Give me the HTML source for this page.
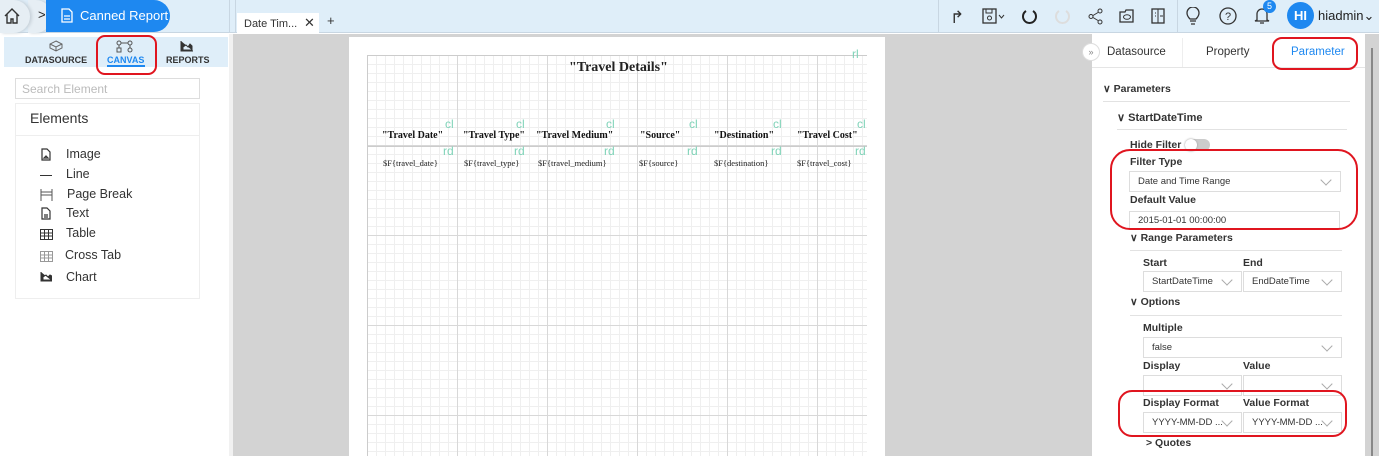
<!DOCTYPE html>
<html><head><meta charset="utf-8"><style>
*{box-sizing:border-box;margin:0;padding:0}
body{width:1379px;height:456px;overflow:hidden;background:#fff;font-family:"Liberation Sans",sans-serif;color:#222;position:relative;font-size:11px}
.a{position:absolute}
.sel{position:absolute;border:1px solid #ddd;background:#fff;font-size:9.5px;color:#333;padding-left:8px;display:flex;align-items:center}
.sel .c{position:absolute;right:10px;top:50%;width:8px;height:8px;border-right:1px solid #aaa;border-bottom:1px solid #aaa;transform:translateY(-75%) rotate(45deg)}
.lbl{position:absolute;font-size:10.5px;font-weight:bold;color:#333}
.ring{position:absolute;border:2.5px solid #e0151f;border-radius:14px}
.hdr{position:absolute;font-size:10.5px;color:#333;font-weight:bold}
.hl{position:absolute;height:1px;background:#e2e2e2}
.cl{position:absolute;color:#7fd3b8;font-size:12px}
.th{position:absolute;font-family:"Liberation Serif",serif;font-weight:bold;font-size:10px;color:#111}
.td{position:absolute;font-family:"Liberation Serif",serif;font-size:8.5px;color:#222}
.it{position:absolute;left:66px;font-size:12.5px;color:#333}
.ic{position:absolute;left:40px;font-size:12px;color:#333}
.tb{position:absolute;top:8px;font-size:17px;color:#333}
</style></head><body>
<div class="a" style="left:0;top:0;width:1379px;height:33px;background:#dfeef9;border-bottom:1px solid #c8d6e2"></div>
<div class="a" style="left:28px;top:0;width:24px;height:33px;border-radius:0 17px 17px 0;background:#e6eef4;box-shadow:2px 0 3px #c6d0d8"></div>
<div class="a" style="left:0;top:0;width:30px;height:33px;border-radius:0 17px 17px 0;background:#e6eef4;box-shadow:2px 0 3px #c6d0d8"></div>
<svg class="a" style="left:4px;top:8px" width="16" height="16"><path d="M1 8L8 1l7 7M3 6v9h4v-4h2v4h4V6" fill="none" stroke="#333" stroke-width="1.4"/></svg>
<div class="a" style="left:38px;top:7px;font-size:13px">&gt;</div>
<div class="a" style="left:46px;top:0;width:124px;height:32px;border-radius:0 17px 17px 0;background:#1e88f0"></div>
<svg class="a" style="left:61px;top:8px" width="12" height="15"><path d="M1 1h7l3 3v10H1z M3 8h6M3 11h6" fill="none" stroke="#fff" stroke-width="1.3"/></svg>
<div class="a" style="left:80px;top:8px;font-size:13px;color:#fff">Canned Report</div>
<div class="a" style="left:229px;top:0;width:1px;height:33px;background:#c8d6e2"></div>
<div class="a" style="left:235px;top:0;width:1px;height:33px;background:#c8d6e2"></div>
<div class="a" style="left:237px;top:13px;width:82px;height:21px;background:#fff"></div>
<div class="a" style="left:244px;top:18px;font-size:11px;color:#333">Date Tim...</div>
<div class="a" style="left:304px;top:15px;font-size:13px;color:#333">✕</div>
<div class="a" style="left:327px;top:13px;font-size:13px;color:#333">+</div>
<div class="a" style="left:938px;top:0;width:1px;height:33px;background:#c8d6e2"></div>
<div class="a" style="left:1177px;top:0;width:1px;height:33px;background:#c8d6e2"></div>
<div class="tb" style="left:950px">↱</div>
<svg class="a" style="left:982px;top:8px" width="24" height="17"><rect x="1" y="1" width="13" height="14" fill="none" stroke="#333" stroke-width="1.3"/><rect x="4" y="1" width="6" height="4" fill="none" stroke="#333"/><circle cx="7.5" cy="10" r="2" fill="none" stroke="#333"/><path d="M17 7l2.5 3 2.5-3" fill="none" stroke="#333"/></svg>
<svg class="a" style="left:1021px;top:8px" width="17" height="17"><path d="M5 3A6.5 6.5 0 1 0 12 3" fill="none" stroke="#222" stroke-width="2"/></svg>
<svg class="a" style="left:1054px;top:8px" width="17" height="17"><path d="M5 3A6.5 6.5 0 1 0 12 3" fill="none" stroke="#ddd" stroke-width="2"/></svg>
<svg class="a" style="left:1088px;top:8px" width="15" height="17"><circle cx="12" cy="3" r="2" fill="none" stroke="#333"/><circle cx="3" cy="8.5" r="2" fill="none" stroke="#333"/><circle cx="12" cy="14" r="2" fill="none" stroke="#333"/><path d="M5 7.5l5-3M5 9.5l5 3" stroke="#333"/></svg>
<svg class="a" style="left:1119px;top:9px" width="16" height="14"><path d="M1 3h5l1-2h7v12H1z" fill="none" stroke="#333" stroke-width="1.3"/><ellipse cx="8" cy="8" rx="3.5" ry="2.3" fill="none" stroke="#333"/></svg>
<svg class="a" style="left:1151px;top:8px" width="14" height="16"><rect x="1" y="1" width="12" height="14" fill="none" stroke="#333" stroke-width="1.3"/><path d="M7 1v14M4 5h1M4 8h1M9 8h3" stroke="#333"/></svg>
<svg class="a" style="left:1186px;top:7px" width="14" height="18"><path d="M4 12C1 9 1 7 1 6a6 6 0 0 1 12 0c0 1 0 3-3 6zM4 14h6M5 17h4" fill="none" stroke="#333" stroke-width="1.3"/></svg>
<svg class="a" style="left:1219px;top:7px" width="18" height="18"><circle cx="9" cy="9" r="8" fill="none" stroke="#333" stroke-width="1.3"/><text x="9" y="13" text-anchor="middle" font-size="11" font-family="Liberation Sans" fill="#333">?</text></svg>
<svg class="a" style="left:1254px;top:7px" width="16" height="18"><path d="M3 13V7a5 5 0 0 1 10 0v6l2 1H1zM6 16h4" fill="none" stroke="#333" stroke-width="1.3"/></svg>
<div class="a" style="left:1263px;top:0;width:13px;height:13px;border-radius:50%;background:#1e88f0;color:#fff;font-size:9px;text-align:center;line-height:13px">5</div>
<div class="a" style="left:1287px;top:2px;width:27px;height:27px;border-radius:50%;background:#1e88f0;color:#fff;font-size:13px;font-weight:bold;text-align:center;line-height:27px">HI</div>
<div class="a" style="left:1318px;top:8px;font-size:13px;color:#222">hiadmin⌄</div>
<div class="a" style="left:4px;top:37px;width:224px;height:30px;background:#dfeef9"></div>
<div class="a" style="left:25px;top:55px;font-size:9px;font-weight:bold;color:#333">DATASOURCE</div>
<svg class="a" style="left:49px;top:40px" width="14" height="12"><path d="M7 1l6 3v4l-6 3-6-3V4zM1 4l6 3 6-3M7 7v4" fill="none" stroke="#666"/></svg>
<div class="a" style="left:107px;top:55px;font-size:9px;font-weight:bold;color:#1e88f0">CANVAS</div>
<div class="a" style="left:107px;top:65px;width:38px;height:2px;background:#1e88f0"></div>
<svg class="a" style="left:116px;top:40px" width="18" height="13"><circle cx="3" cy="3" r="2" fill="none" stroke="#555"/><circle cx="14" cy="3" r="2" fill="none" stroke="#555"/><path d="M5 3h7M3 5v3M14 5v3" stroke="#555"/><rect x="1" y="8" width="4" height="4" fill="none" stroke="#555"/><circle cx="14" cy="10" r="2" fill="none" stroke="#555"/></svg>
<div class="a" style="left:166px;top:55px;font-size:9px;font-weight:bold;color:#333">REPORTS</div>
<svg class="a" style="left:180px;top:41px" width="13" height="11"><path d="M1 0v10h12M3 9V6l3-2 2 2 2-3 2 2v4z" fill="#333" stroke="#333"/></svg>
<div class="ring" style="left:96px;top:35px;width:61px;height:40px;border-radius:9px"></div>
<div class="a" style="left:15px;top:78px;width:185px;height:21px;border:1px solid #ddd;font-size:12px;color:#bbb;padding:3px 6px">Search Element</div>
<div class="a" style="left:15px;top:103px;width:185px;height:196px;border:1px solid #eee"></div>
<div class="a" style="left:15px;top:135px;width:185px;height:1px;background:#eee"></div>
<div class="a" style="left:30px;top:110px;font-size:14px;color:#333">Elements</div>
<svg class="a" style="left:41px;top:148px" width="10" height="13"><path d="M1 1h5l3 3v8H1z M3 10l2-2 2 2z" fill="none" stroke="#333" stroke-width="1.2"/></svg><div class="it" style="top:147px">Image</div>
<div class="a" style="left:40px;top:175px;width:12px;height:1px;background:#333"></div><div class="it" style="top:167px">Line</div>
<svg class="a" style="left:40px;top:189px" width="13" height="12"><path d="M1 0v12M12 0v12M1 6h11M1 3h11" fill="none" stroke="#555"/></svg><div class="it" style="top:187px;left:67px">Page Break</div>
<svg class="a" style="left:41px;top:207px" width="10" height="13"><path d="M1 1h5l3 3v8H1z M3 8h4M3 10h4" fill="none" stroke="#333" stroke-width="1.2"/></svg><div class="it" style="top:206px">Text</div>
<svg class="a" style="left:40px;top:229px" width="13" height="11"><rect x="0.5" y="0.5" width="12" height="10" fill="none" stroke="#333"/><path d="M0 4h13M0 7h13M4.5 0v11M8.5 0v11" stroke="#333"/></svg><div class="it" style="top:226px">Table</div>
<svg class="a" style="left:40px;top:251px" width="13" height="11"><rect x="0.5" y="0.5" width="12" height="10" fill="none" stroke="#999"/><path d="M0 4h13M0 7h13M4.5 0v11M8.5 0v11" stroke="#999"/></svg><div class="it" style="top:248px;left:65px">Cross Tab</div>
<svg class="a" style="left:40px;top:272px" width="12" height="10"><path d="M1 0v9h11M3 8V5l3-2 2 2 2-2 2 1v4z" fill="#333" stroke="#333"/></svg><div class="it" style="top:270px">Chart</div>
<div class="a" style="left:229px;top:34px;width:4px;height:422px;background:#f1f1f1"></div>
<div class="a" style="left:233px;top:34px;width:859px;height:422px;background:#d3d3d3"></div>
<div class="a" style="left:349px;top:37px;width:536px;height:419px;background:#fff"></div>
<div class="a" style="left:367px;top:55px;width:500px;height:401px;border-left:1px solid #ccc;border-top:1px solid #ccc;
background-image:linear-gradient(to right,#d8d8d8 1px,transparent 1px),linear-gradient(to bottom,#d8d8d8 1px,transparent 1px),linear-gradient(to right,#efefef 1px,transparent 1px),linear-gradient(to bottom,#efefef 1px,transparent 1px);
background-size:90px 90px,90px 90px,9px 9px,9px 9px;background-position:-1px -1px"></div>
<div class="a" style="left:367px;top:146px;width:500px;height:1px;background:#ccc"></div>
<div class="a" style="left:569px;top:60px;font-family:'Liberation Serif',serif;font-weight:bold;font-size:14px">"Travel Details"</div>
<div class="cl" style="left:852px;top:47px">rl</div>
<div class="cl" style="left:445px;top:117px">cl</div><div class="cl" style="left:516px;top:117px">cl</div><div class="cl" style="left:606px;top:117px">cl</div><div class="cl" style="left:689px;top:117px">cl</div><div class="cl" style="left:773px;top:117px">cl</div><div class="cl" style="left:857px;top:117px">cl</div>
<div class="cl" style="left:443px;top:144px">rd</div><div class="cl" style="left:514px;top:144px">rd</div><div class="cl" style="left:604px;top:144px">rd</div><div class="cl" style="left:687px;top:144px">rd</div><div class="cl" style="left:771px;top:144px">rd</div><div class="cl" style="left:855px;top:144px">rd</div>
<div class="th" style="left:382px;top:130px">"Travel Date"</div>
<div class="th" style="left:463px;top:130px">"Travel Type"</div>
<div class="th" style="left:536px;top:130px">"Travel Medium"</div>
<div class="th" style="left:640px;top:130px">"Source"</div>
<div class="th" style="left:714px;top:130px">"Destination"</div>
<div class="th" style="left:797px;top:130px">"Travel Cost"</div>
<div class="td" style="left:383px;top:158px">$F{travel_date}</div>
<div class="td" style="left:464px;top:158px">$F{travel_type}</div>
<div class="td" style="left:538px;top:158px">$F{travel_medium}</div>
<div class="td" style="left:639px;top:158px">$F{source}</div>
<div class="td" style="left:714px;top:158px">$F{destination}</div>
<div class="td" style="left:797px;top:158px">$F{travel_cost}</div>
<div class="a" style="left:1092px;top:37px;width:273px;height:419px;background:#fff"></div>
<div class="a" style="left:1365px;top:34px;width:14px;height:422px;background:#d3d3d3"></div>
<div class="a" style="left:1371px;top:48px;width:2px;height:408px;background:#888"></div>
<div class="a" style="left:1092px;top:67px;width:273px;height:1px;background:#e5e5e5"></div>
<div class="a" style="left:1182px;top:38px;width:1px;height:29px;background:#eee"></div>
<div class="a" style="left:1082px;top:43px;width:18px;height:18px;border-radius:50%;background:#fff;border:1px solid #ddd;font-size:9px;color:#888;text-align:center;line-height:16px">»</div>
<div class="a" style="left:1107px;top:46px;font-size:11.5px;color:#333">Datasource</div>
<div class="a" style="left:1206px;top:46px;font-size:11.5px;color:#333">Property</div>
<div class="a" style="left:1291px;top:46px;font-size:11.5px;color:#1e88f0">Parameter</div>
<div class="ring" style="left:1272px;top:37px;width:86px;height:33px;border-radius:10px"></div>
<div class="hdr" style="left:1103px;top:83px">∨ Parameters</div>
<div class="hl" style="left:1103px;top:101px;width:247px"></div>
<div class="hdr" style="left:1117px;top:111px;font-size:11px">∨ StartDateTime</div>
<div class="hl" style="left:1117px;top:129px;width:230px"></div>
<div class="lbl" style="left:1130px;top:139px">Hide Filter</div>
<div class="a" style="left:1185px;top:139px;width:25px;height:12px;border-radius:6px;background:#ccc"></div>
<div class="a" style="left:1185px;top:139px;width:12px;height:12px;border-radius:6px;background:#fff;box-shadow:0 0 2px #999"></div>
<div class="lbl" style="left:1130px;top:156px">Filter Type</div>
<div class="sel" style="left:1129px;top:171px;width:212px;height:21px">Date and Time Range<span class="c"></span></div>
<div class="lbl" style="left:1130px;top:194px">Default Value</div>
<div class="sel" style="left:1129px;top:211px;width:211px;height:18px">2015-01-01 00:00:00</div>
<div class="ring" style="left:1110px;top:149px;width:248px;height:81px;border-radius:20px"></div>
<div class="hdr" style="left:1130px;top:232px">∨ Range Parameters</div>
<div class="hl" style="left:1130px;top:250px;width:212px"></div>
<div class="lbl" style="left:1143px;top:257px">Start</div><div class="lbl" style="left:1243px;top:257px">End</div>
<div class="sel" style="left:1143px;top:271px;width:99px;height:21px">StartDateTime<span class="c"></span></div>
<div class="sel" style="left:1243px;top:271px;width:99px;height:21px">EndDateTime<span class="c"></span></div>
<div class="hdr" style="left:1130px;top:296px">∨ Options</div>
<div class="hl" style="left:1130px;top:315px;width:212px"></div>
<div class="lbl" style="left:1143px;top:322px">Multiple</div>
<div class="sel" style="left:1143px;top:337px;width:199px;height:21px">false<span class="c"></span></div>
<div class="lbl" style="left:1143px;top:360px">Display</div><div class="lbl" style="left:1243px;top:360px">Value</div>
<div class="sel" style="left:1143px;top:375px;width:99px;height:21px"><span class="c"></span></div>
<div class="sel" style="left:1243px;top:375px;width:99px;height:21px"><span class="c"></span></div>
<div class="lbl" style="left:1143px;top:397px">Display Format</div><div class="lbl" style="left:1243px;top:397px">Value Format</div>
<div class="sel" style="left:1143px;top:412px;width:99px;height:21px">YYYY-MM-DD ...<span class="c"></span></div>
<div class="sel" style="left:1243px;top:412px;width:99px;height:21px">YYYY-MM-DD ...<span class="c"></span></div>
<div class="ring" style="left:1118px;top:390px;width:229px;height:47px;border-radius:14px"></div>
<div class="hdr" style="left:1146px;top:437px">&gt; Quotes</div>
</body></html>
